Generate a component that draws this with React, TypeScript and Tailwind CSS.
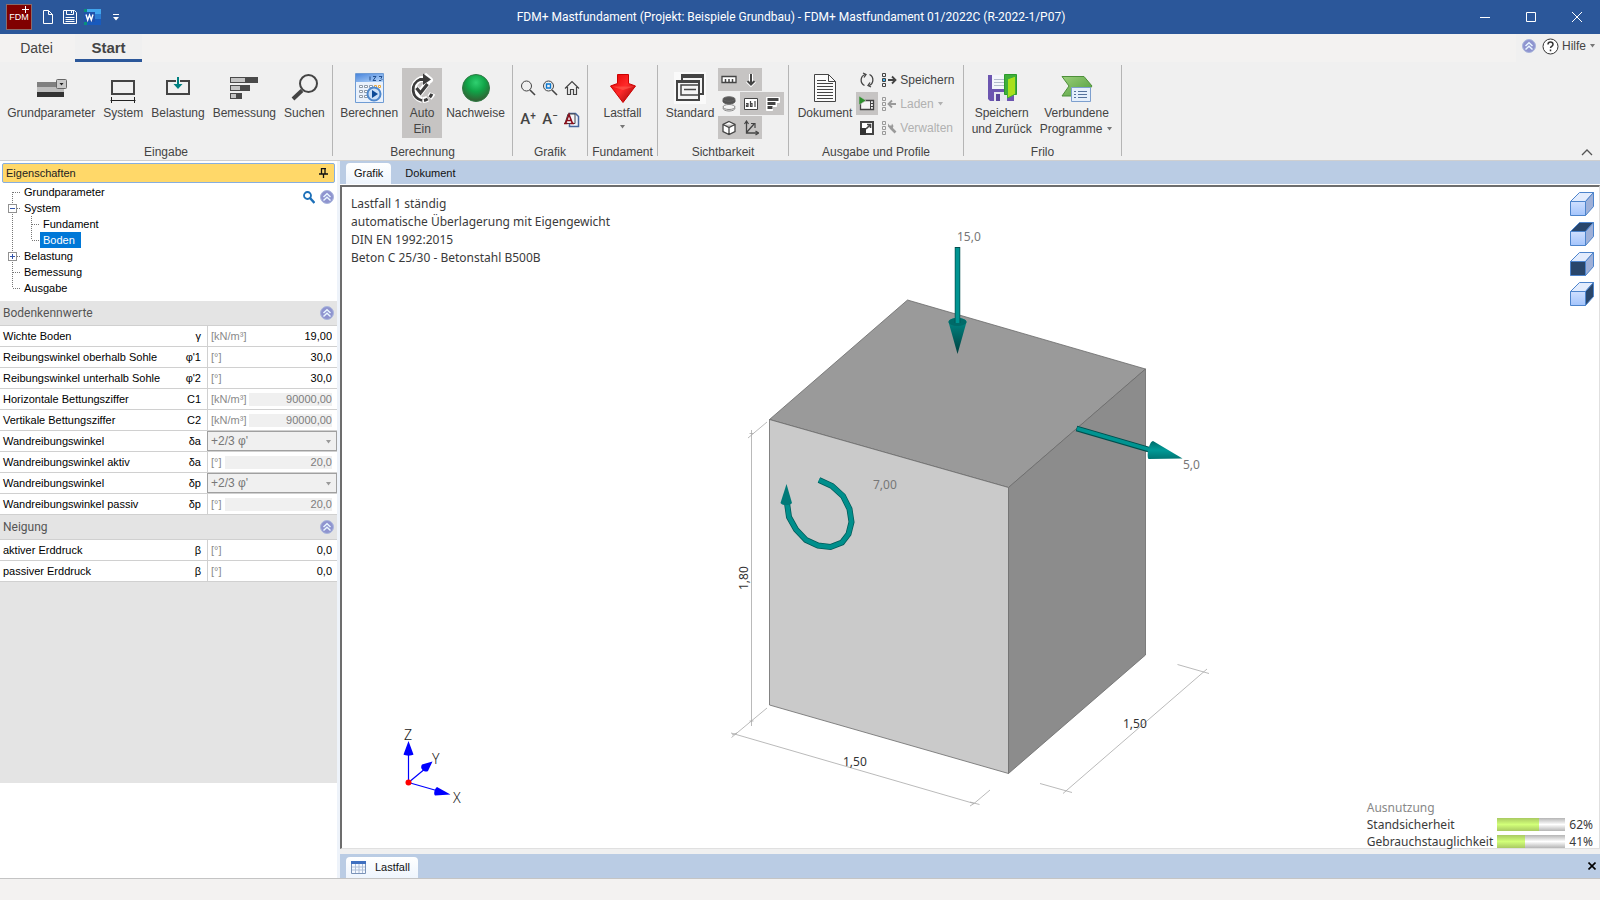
import { useState } from 'react'
import type { ReactNode } from 'react'
import clsx from 'clsx'

/* ---------- shared icons ---------- */

function Caret({ className = 'text-[#777]' }: { className?: string }) {
  return (
    <svg width="7" height="4" viewBox="0 0 7 4" className={clsx('shrink-0', className)}>
      <path d="M1 0h5L3.500 3.500z" fill="currentColor" />
    </svg>
  )
}

function CollapseIcon({ size = 14 }: { size?: number }) {
  return (
    <svg width={size} height={size} viewBox="0 0 14 14">
      <circle cx="7" cy="7" r="6.500" fill="#8f94cf" stroke="#a9b6dc" />
      <path d="M3.500 7 7 3.700 10.500 7M3.500 10.500 7 7.200l3.500 3.300" fill="none" stroke="#e8f6ff" strokeWidth="1.500" />
    </svg>
  )
}

function AppLogo() {
  return (
    <div className="relative flex h-[26px] w-[26px] items-center justify-center border border-[#8a6a6a] bg-[#800000]">
      <span className="font-['Liberation_Sans'] text-[9px] leading-3 text-white">FDM</span>
      <svg width="7" height="7" viewBox="0 0 7 7" className="absolute top-px right-0.5">
        <path d="M3.500 0v7M0 3.500h7" stroke="#fff" />
      </svg>
    </div>
  )
}

function NewIcon() {
  return (
    <svg width="12" height="16" viewBox="0 0 12 16" fill="none" stroke="#fff">
      <path d="M1.500 1.500h5l4 4v9h-9zM6.500 1.500v4h4" />
    </svg>
  )
}

function DiskIcon() {
  return (
    <svg width="16" height="16" viewBox="0 0 16 16" fill="none" stroke="#fff">
      <path d="M1.500 1.500h11l2 2v11h-13zM4.500 1.500v4h7v-4M9.500 2v2M3.500 8.500h9M3.500 10.500h9M3.500 12.500h9" />
    </svg>
  )
}

function WordIcon() {
  return (
    <svg width="17" height="16" viewBox="0 0 17 16">
      <path d="M3 0h14v5H3z" fill="#41a5ee" />
      <path d="M3 5h14v5H3z" fill="#2b7cd3" />
      <path d="M3 10h14v6H3z" fill="#185abd" />
      <path d="M0 0h3v3H0zM0 13h3v3H0z" fill="#0a8f7b" />
      <path d="M0 3h11v10H0z" fill="#2052ab" />
      <path d="M2 5.500 3.700 11 5.500 6 7.300 11 9 5.500" fill="none" stroke="#fff" strokeWidth="1.400" />
    </svg>
  )
}

/* ---------- large ribbon icons ---------- */

function ParameterIcon() {
  return (
    <svg width="32" height="32" viewBox="0 0 32 32">
      <path d="M2 10h27v5H2z" fill="#808080" />
      <path d="M2 15h27v5H2z" fill="#bdbdbd" />
      <path d="M2 20h27v5H2z" fill="#333" />
      <rect x="21.500" y="7.500" width="10" height="9" rx="1" fill="#c9c9c9" stroke="#666" />
      <path d="M24.500 11h4l-2 2.500z" fill="#222" />
    </svg>
  )
}

function SystemIcon() {
  return (
    <svg width="32" height="32" viewBox="0 0 32 32" fill="none">
      <path d="M5 9h22v13H5z" stroke="#444" strokeWidth="2" />
      <path d="M3.500 28.500h25M4.500 25v6M27.500 25v6" stroke="#222" />
    </svg>
  )
}

function LoadIcon() {
  return (
    <svg width="32" height="32" viewBox="0 0 32 32" fill="none">
      <path d="M5 9h22v13H5z" stroke="#444" strokeWidth="2" />
      <path d="M14 5h4v7h3.500v1.500L16 18l-5.500-4.500V12H14z" fill="#f0f0f0" />
      <path d="M15 5h2v7h3.500L16 17l-4.500-5H15z" fill="#008080" />
    </svg>
  )
}

function DesignIcon() {
  return (
    <svg width="32" height="32" viewBox="0 0 32 32">
      <path d="M2 5h28v6H2zM2 13h20v6H2zM2 21h12v6H2z" fill="#4a4a4a" />
      <path d="M3 6h14v4H3zM3 14h9v4H3zM3 22h5v4H3z" fill="#c4c4c4" />
    </svg>
  )
}

function SearchIcon() {
  return (
    <svg width="32" height="32" viewBox="0 0 32 32" fill="none" stroke="#444">
      <circle cx="20.500" cy="11.500" r="8.500" strokeWidth="2" />
      <path d="M14 18.500 5 27" strokeWidth="4" />
    </svg>
  )
}

function CalculateIcon() {
  return (
    <svg width="32" height="32" viewBox="0 0 32 32">
      <defs>
        <linearGradient id="calcHead" x1="0" y1="0" x2="1" y2="1">
          <stop offset="0" stopColor="#4a86dc" />
          <stop offset="1" stopColor="#b8d7fa" />
        </linearGradient>
      </defs>
      <path d="M2.500 1.500h28v29h-28z" fill="#e9f1fc" stroke="#6f9cd4" />
      <path d="M3 2h27v8H3z" fill="url(#calcHead)" />
      <path d="M17 4.500v4M20 4.500h3l-3 4h3M26 4.500h3l-1 2 1 1-1 1h-2" fill="none" stroke="#23508f" />
      <g fill="#fff" stroke="#8c99a8">
        <path d="M6.500 13.500h3v2h-3zM11.500 13.500h3v2h-3zM16.500 13.500h3v2h-3zM6.500 18.500h3v2h-3zM11.500 18.500h3v2h-3zM6.500 23.500h3v2h-3zM11.500 23.500h3v2h-3z" />
        <path d="M21.500 13.500h2v2h-2zM25.500 13.500h2v2h-2z" stroke="#eba83c" />
      </g>
      <circle cx="21" cy="22" r="6.500" fill="#c9dff8" stroke="#4f88cc" strokeWidth="2" />
      <path d="M19 18v8l6-4z" fill="#0c4a97" />
    </svg>
  )
}

function AutoIcon() {
  return (
    <svg width="32" height="32" viewBox="0 0 32 32" fill="none">
      <g stroke="#fff" strokeWidth="6" strokeLinejoin="round">
        <path d="M16 28A11 11 0 0 1 15 7h4M18 3l6 5-6 4M10 16l4 5 8-11" />
        <path d="M17 28a11 11 0 0 0 10-8" strokeDasharray="5 2" />
      </g>
      <path d="M16 28.500A11 11 0 0 1 14 7.500h6" stroke="#3c3c3c" strokeWidth="2.800" />
      <path d="M17 1.500 25 7.500 17 13z" fill="#3c3c3c" />
      <path d="m10.500 16 4 5 7-9" stroke="#3c3c3c" strokeWidth="3.200" />
      <path d="M18 28.500a11 11 0 0 0 8.500-9" stroke="#3c3c3c" strokeWidth="3" strokeDasharray="4 2.500" />
    </svg>
  )
}

function ChecksIcon() {
  return (
    <svg width="32" height="32" viewBox="0 0 32 32">
      <defs>
        <radialGradient id="ball" cx=".5" cy=".3" r=".75">
          <stop offset="0" stopColor="#2fd070" />
          <stop offset=".45" stopColor="#10a347" />
          <stop offset="1" stopColor="#39512f" />
        </radialGradient>
      </defs>
      <circle cx="16" cy="16" r="13.500" fill="url(#ball)" stroke="#2f7a45" />
    </svg>
  )
}

function LoadCaseIcon() {
  return (
    <svg width="32" height="32" viewBox="0 0 32 32">
      <defs>
        <linearGradient id="redArrow" x1="0" y1="0" x2="1" y2="1">
          <stop offset="0" stopColor="#e00000" />
          <stop offset=".5" stopColor="#ff2a2a" />
          <stop offset="1" stopColor="#8e0000" />
        </linearGradient>
      </defs>
      <path d="M10.500 2.500h11v9L28.500 14 16 30.500 3.500 14l7-2.500z" fill="url(#redArrow)" stroke="#c00" />
      <path d="M5 14.500h22L16 18z" fill="#ff5d50" opacity=".6" />
    </svg>
  )
}

function StandardIcon() {
  return (
    <svg width="32" height="32" viewBox="0 0 32 32" fill="none">
      <path d="M0 0h32v32H0z" fill="#fafafa" />
      <path d="M8 3h21v19H8z" fill="#f5f5f5" stroke="#444" strokeWidth="2" />
      <path d="M7 2h23v4H7z" fill="#444" />
      <path d="M3 9h22v19H3z" fill="#f5f5f5" stroke="#444" strokeWidth="2" />
      <path d="M2 8h24v3H2z" fill="#444" />
      <path d="M7 13h18v10H7z" stroke="#444" strokeWidth="1.500" />
      <path d="M10 17.500h12" stroke="#444" strokeWidth="1.500" />
    </svg>
  )
}

function DocumentIcon() {
  return (
    <svg width="32" height="32" viewBox="0 0 32 32" fill="none" stroke="#444">
      <path d="M5.500 2.500h14l7 7v20h-21z" fill="#fbfbfb" />
      <path d="M19.500 2.500v7h7" />
      <path d="M8 8.500h9M8 11.500h16M8 14.500h16M8 17.500h16M8 20.500h16M8 23.500h16M8 26.500h16" />
    </svg>
  )
}

function SaveBackIcon() {
  return (
    <svg width="32" height="32" viewBox="0 0 32 32">
      <path d="M2 3h26v26H4l-2-2z" fill="#6c55b0" />
      <path d="M6 3h14v14H6z" fill="#f4f6fb" />
      <path d="M8 7.500h10M8 10.500h10M8 13.500h10" stroke="#b3bccd" />
      <path d="M8 20h13v9H8z" fill="#e6e6ee" />
      <path d="M10 22h4v7h-4z" fill="#5b469c" />
      <path d="M18.500 2.500h12v20h-12z" fill="#3fae3a" stroke="#2b9a2b" />
      <path d="M21.500 7 29.500 4v18l-8 4z" fill="#a8e01c" stroke="#3fae3a" />
    </svg>
  )
}

function LinkedIcon() {
  return (
    <svg width="32" height="32" viewBox="0 0 32 32">
      <defs>
        <linearGradient id="greenArrow" x1="0" y1="0" x2="1" y2="1">
          <stop offset="0" stopColor="#9bcf7a" />
          <stop offset="1" stopColor="#4f9c3c" />
        </linearGradient>
      </defs>
      <path d="M1 4.500h22l8 9.500-8 10H1L8 14z" fill="url(#greenArrow)" stroke="#4d8f3a" />
      <path d="M10.500 15.500h19v14h-19z" fill="#e4eefb" stroke="#7d9fce" />
      <path d="M13 19.500h2m2 0h9M13 22.500h2m2 0h9M13 25.500h2m2 0h9" stroke="#54719c" />
    </svg>
  )
}

/* ---------- small ribbon icons ---------- */

function Small({ children }: { children: ReactNode }) {
  return (
    <svg width="16" height="16" viewBox="0 0 16 16" fill="none" stroke="#444" className="shrink-0">
      {children}
    </svg>
  )
}

const zoomIcon = (
  <Small>
    <circle cx="6.500" cy="6" r="5" />
    <path d="m10 10 5 5" strokeWidth="1.600" />
  </Small>
)
const zoomFitIcon = (
  <Small>
    <circle cx="6.500" cy="6" r="5" />
    <path d="m10 10 5 5" strokeWidth="1.600" />
    <path d="M4.500 4h4v4h-4z" stroke="#0a78d0" strokeWidth="1.400" />
  </Small>
)
const homeIcon = (
  <Small>
    <path d="M1 8.500 8 1.500l7 7M3.500 7v7.500h3v-5h3v5h3V7" strokeWidth="1.200" />
  </Small>
)
const docAIcon = (
  <Small>
    <path d="M5.500 1.500h6l3 3v10h-9z" fill="#eef3fc" stroke="#46659c" strokeWidth="1.500" />
    <path d="M1 11.500h10V2H4z" fill="#f4f6fb" />
    <path d="m1.500 11.500 3.500-9 3.500 9M3 8.500h4M0 11.500h3.500M6.500 11.500H10" stroke="#8b0d1a" strokeWidth="1.600" />
  </Small>
)
const rulerIcon = (
  <Small>
    <path d="M1 4.500h14v6H1z" fill="#fff" strokeWidth="1.300" />
    <path d="M4.500 10V7M8 10V7M11.500 10V7" strokeWidth="1.500" />
  </Small>
)
const downIcon = (
  <Small>
    <path d="M8 2v10M4.500 9 8 12.500 11.500 9" stroke="#fff" strokeWidth="4" />
    <path d="M8 2v10M4.500 9 8 12.500 11.500 9" strokeWidth="2" />
  </Small>
)
const layersIcon = (
  <Small>
    <path d="M2 12c0 4 12 4 12 0" fill="#f4f4f4" stroke="#888" />
    <ellipse cx="8" cy="11" rx="6" ry="2.500" fill="#f4f4f4" stroke="#888" />
    <path d="M2 3.500v2c0 3 12 3 12 0v-2z" fill="#555" stroke="#555" />
    <ellipse cx="8" cy="3" rx="6" ry="2.200" fill="#555" stroke="#666" />
  </Small>
)
const labelIcon = (
  <Small>
    <path d="M1.500 2.500h13v11h-13z" fill="#fff" />
    <path d="M3 7.500h2v3H3.500v-1.500H5M7.500 5v5.500H9v-3H7.500M12 5v6" strokeWidth="1.200" />
  </Small>
)
const barsIcon = (
  <Small>
    <path d="M1.500 1.500h13v5h-3v4h-4v4h-6z" fill="#fff" stroke="#fff" />
    <path d="M2.500 3.500h11M2.500 7.500h8M2.500 11.500h5" strokeWidth="3" />
  </Small>
)
const cubeIcon = (
  <Small>
    <path d="M8 1.500 14 4.500v7L8 14.500l-6-3v-7zM2 4.500l6 3 6-3M8 7.500v7" fill="#fff" strokeWidth="1.300" />
  </Small>
)
const axesIcon = (
  <Small>
    <path d="M3.500 2v11H15M3.500 12.500l8-9" strokeWidth="1.300" />
    <path d="M8 3.500h4V8M1.500 4l2-3 2 3M12.500 11l3 2-3 2" strokeWidth="1.200" />
  </Small>
)
const refreshIcon = (
  <Small>
    <path d="M6 2.500A6 6 0 0 0 5.500 13.500M10 13.500A6 6 0 0 0 10.500 2.500" strokeWidth="1.300" />
    <path d="m4 1 3 1.500L5 5.500M12 15l-3-1.500 2-3" strokeWidth="1.300" />
  </Small>
)
const playWindowIcon = (
  <Small>
    <path d="M1.500 4.500h13v9h-13z" fill="#f4f4f4" strokeWidth="1.300" />
    <path d="M11.500 4.500v9M12 7.500h3M12 10.500h3" />
    <path d="M0 0 7 4.500 0 9z" fill="#2c8f2c" stroke="#c6c4c3" strokeWidth=".6" />
  </Small>
)
const expandIcon = (
  <Small>
    <path d="M2 2h12v12H2z" fill="#fff" strokeWidth="2" />
    <path d="M1 8h6v7H1z" fill="#333" stroke="none" />
    <path d="m7 9 4.500-4.500M8 4.500h3.500V8" strokeWidth="1.600" />
  </Small>
)

function ProfileIcon({ kind }: { kind: 'save' | 'load' | 'manage' }) {
  const color = kind === 'save' ? '#444' : '#9a9a9a'
  return (
    <svg width="16" height="16" viewBox="0 0 16 16" fill="none" stroke={color} className="shrink-0">
      <path d="M1.500 1.500h3v3h-3zM1.500 11.500h3v3h-3z" />
      <path d="M1.500 6.500h3v3h-3z" fill={kind === 'save' ? '#3bb4f2' : 'none'} />
      {kind === 'save' && <path d="M7 8h7M11 4.500 14.500 8 11 11.500" strokeWidth="1.800" />}
      {kind === 'load' && <path d="M15 8H8M11 4.500 7.500 8l3.500 3.500" strokeWidth="1.800" />}
      {kind === 'manage' && (
        <>
          <path d="m9.500 7.500 5 5" strokeWidth="2.600" />
          <path d="M7 3.500v3l2 2h2.500l1-2.500-1.500-2.500-.5 2h-2z" fill={color} stroke="none" />
        </>
      )}
    </svg>
  )
}

/* ---------- ribbon ---------- */

function BigButton({ icon, lines, active = false, caret = false }: { icon: ReactNode, lines: string[], active?: boolean, caret?: boolean }) {
  return (
    <button className={clsx('flex h-[70px] shrink-0 flex-col items-center px-1 pt-1 leading-4', active && 'bg-[#c6c4c3]')}>
      {icon}
      <span className="pt-px">{lines[0]}</span>
      {lines[1] && (
        <span className="flex items-center gap-1">
          {lines[1]}
          {caret && <Caret />}
        </span>
      )}
      {!lines[1] && caret && <span className="pt-1"><Caret /></span>}
    </button>
  )
}

function RibbonGroup({ title, className, children }: { title: string, className: string, children: ReactNode }) {
  return (
    <section className={clsx('flex shrink-0 flex-col border-r border-[#b5b5b5]', className)}>
      <div className="flex flex-1 justify-center pt-[3px]">{children}</div>
      <h2 className="text-center leading-2">{title}</h2>
    </section>
  )
}

function ToolCell({ label, active = false, children }: { label: string, active?: boolean, children: ReactNode }) {
  return (
    <button aria-label={label} className={clsx('flex h-[23px] w-[22px] items-center justify-center', active && 'bg-[#c6c4c3]')}>
      {children}
    </button>
  )
}

function Ribbon() {
  return (
    <div className="flex h-[99px] border-b border-[#cfcfcf] bg-[#f0f0f0] pt-[3px] pb-1 text-[12px] text-[#444]">
      <RibbonGroup title="Eingabe" className="w-[333px]">
        <BigButton icon={<ParameterIcon />} lines={['Grundparameter']} />
        <BigButton icon={<SystemIcon />} lines={['System']} />
        <BigButton icon={<LoadIcon />} lines={['Belastung']} />
        <BigButton icon={<DesignIcon />} lines={['Bemessung']} />
        <BigButton icon={<SearchIcon />} lines={['Suchen']} />
      </RibbonGroup>
      <RibbonGroup title="Berechnung" className="w-[180px]">
        <BigButton icon={<CalculateIcon />} lines={['Berechnen']} />
        <BigButton icon={<AutoIcon />} lines={['Auto', 'Ein']} active />
        <BigButton icon={<ChecksIcon />} lines={['Nachweise']} />
      </RibbonGroup>
      <RibbonGroup title="Grafik" className="w-[75px]">
        <div className="grid grid-cols-3 content-start gap-y-[9px] pt-2">
          <ToolCell label="Zoom">{zoomIcon}</ToolCell>
          <ToolCell label="Zoom Fenster">{zoomFitIcon}</ToolCell>
          <ToolCell label="Ansicht zurücksetzen">{homeIcon}</ToolCell>
          <ToolCell label="Schrift größer"><span className="font-[Roboto] text-[15px] font-medium">A<sup className="text-[10px]">+</sup></span></ToolCell>
          <ToolCell label="Schrift kleiner"><span className="font-[Roboto] text-[15px] font-medium">A<sup className="text-[10px]">−</sup></span></ToolCell>
          <ToolCell label="Schrift">{docAIcon}</ToolCell>
        </div>
      </RibbonGroup>
      <RibbonGroup title="Fundament" className="w-[70px]">
        <BigButton icon={<LoadCaseIcon />} lines={['Lastfall']} caret />
      </RibbonGroup>
      <RibbonGroup title="Sichtbarkeit" className="w-[131px]">
        <BigButton icon={<StandardIcon />} lines={['Standard']} />
        <div className="grid grid-cols-3 content-start gap-y-px">
          <ToolCell label="Bemaßung" active>{rulerIcon}</ToolCell>
          <ToolCell label="Lasten" active>{downIcon}</ToolCell>
          <span />
          <ToolCell label="Schichten">{layersIcon}</ToolCell>
          <ToolCell label="Texte" active>{labelIcon}</ToolCell>
          <ToolCell label="Ausnutzung" active>{barsIcon}</ToolCell>
          <ToolCell label="Körper" active>{cubeIcon}</ToolCell>
          <ToolCell label="Achsen" active>{axesIcon}</ToolCell>
        </div>
      </RibbonGroup>
      <RibbonGroup title="Ausgabe und Profile" className="w-[175px]">
        <BigButton icon={<DocumentIcon />} lines={['Dokument']} />
        <div className="flex flex-col gap-px">
          <ToolCell label="Aktualisieren">{refreshIcon}</ToolCell>
          <ToolCell label="Vorschau" active>{playWindowIcon}</ToolCell>
          <ToolCell label="Vergrößern">{expandIcon}</ToolCell>
        </div>
        <div className="flex flex-col gap-px pr-1 pl-[3px]">
          <button className="flex h-[23px] items-center gap-[3px]"><ProfileIcon kind="save" />Speichern</button>
          <button className="flex h-[23px] items-center gap-[3px] text-[#b1b1b1]"><ProfileIcon kind="load" />Laden<Caret className="text-[#b1b1b1]" /></button>
          <button className="flex h-[23px] items-center gap-[3px] text-[#b1b1b1]"><ProfileIcon kind="manage" />Verwalten</button>
        </div>
      </RibbonGroup>
      <RibbonGroup title="Frilo" className="w-[158px]">
        <BigButton icon={<SaveBackIcon />} lines={['Speichern', 'und Zurück']} />
        <BigButton icon={<LinkedIcon />} lines={['Verbundene', 'Programme']} caret />
      </RibbonGroup>
      <button aria-label="Menüband reduzieren" className="mt-auto mr-[7px] ml-auto">
        <svg width="12" height="7" viewBox="0 0 12 7" fill="none" stroke="#555" strokeWidth="1.300">
          <path d="m1 6 5-5 5 5" />
        </svg>
      </button>
    </div>
  )
}

function TitleBar() {
  return (
    <header className="flex h-[34px] items-center bg-[#2b579a] text-white">
      <div className="flex flex-1 items-center pl-1.5">
        <AppLogo />
        <button aria-label="Neu" className="ml-2.5"><NewIcon /></button>
        <button aria-label="Speichern" className="ml-2"><DiskIcon /></button>
        <button aria-label="Word-Ausgabe" className="ml-1.5"><WordIcon /></button>
        <button aria-label="Schnellzugriff anpassen" className="ml-3">
          <svg width="6" height="7" viewBox="0 0 6 7"><path d="M0 0h6v1H0zM0 3h6L3 6.500z" fill="#fff" /></svg>
        </button>
      </div>
      <h1 className="pr-6 pb-px font-[Roboto] text-[12px] leading-4 whitespace-nowrap">
        FDM+ Mastfundament (Projekt: Beispiele Grundbau) - FDM+ Mastfundament 01/2022C (R-2022-1/P07)
      </h1>
      <div className="flex flex-1 justify-end">
        <button aria-label="Minimieren" className="flex h-[34px] w-[46px] items-center justify-center">
          <svg width="10" height="10" viewBox="0 0 10 10"><path d="M0 5.500h10" stroke="#fff" /></svg>
        </button>
        <button aria-label="Maximieren" className="flex h-[34px] w-[46px] items-center justify-center">
          <svg width="10" height="10" viewBox="0 0 10 10"><path d="M.5.500h9v9h-9z" fill="none" stroke="#fff" /></svg>
        </button>
        <button aria-label="Schließen" className="flex h-[34px] w-[46px] items-center justify-center">
          <svg width="10" height="10" viewBox="0 0 10 10"><path d="m0 0 10 10M10 0 0 10" stroke="#fff" /></svg>
        </button>
      </div>
    </header>
  )
}

function TabBar() {
  return (
    <nav className="flex h-7 items-stretch bg-[#f3f2f1] text-[14px] text-[#444]">
      <button className="w-[75px] pr-0.5">Datei</button>
      <button className="w-[67px] border-b-3 border-[#2b579a] bg-[#f0f0f0] pt-[3px] text-[15px] font-bold">Start</button>
      <div className="ml-auto flex items-center gap-1.5 bg-[#f0f0f0] pr-1 pb-1 pl-1.5 text-[12px]">
        <button aria-label="Einklappen"><CollapseIcon /></button>
        <button className="flex items-center gap-[3px]">
          <svg width="17" height="17" viewBox="0 0 17 17" fill="none" stroke="#333">
            <circle cx="8.500" cy="8.500" r="7.500" fill="#fff" />
            <path d="M6 6.500c0-3.300 5-3.300 5 0 0 1.800-2.500 1.800-2.500 3.500M8.500 11.500v1.700" strokeWidth="1.500" />
          </svg>
          Hilfe
          <Caret />
        </button>
      </div>
    </nav>
  )
}

/* ---------- property panel ---------- */

type TreeItem = { label: string, level: 1 | 2, box?: '+' | '-', first?: boolean, last?: boolean }

const tree: TreeItem[] = [
  { label: 'Grundparameter', level: 1, first: true },
  { label: 'System', level: 1, box: '-' },
  { label: 'Fundament', level: 2 },
  { label: 'Boden', level: 2, last: true },
  { label: 'Belastung', level: 1, box: '+' },
  { label: 'Bemessung', level: 1 },
  { label: 'Ausgabe', level: 1, last: true },
]

function TreeLines({ item }: { item: TreeItem }) {
  const outerEnd = item.level === 1 && item.last ? 8 : 16
  return (
    <svg width={item.level === 1 ? 21 : 40} height="16" className="shrink-0" fill="none" stroke="#777" strokeDasharray="1 1">
      <path d={`M12.500 ${item.first ? 8 : 0}V${outerEnd}`} />
      {item.level === 1 && <path d="M13 8.500h8" />}
      {item.level === 2 && <path d={`M31.500 0V${item.last ? 8 : 16}M32 8.500h8`} />}
      {item.box && (
        <g strokeDasharray="none">
          <rect x="8.500" y="4.500" width="8" height="8" fill="#fff" stroke="#919191" />
          <path d={item.box === '+' ? 'M10 8.500h5M12.500 6v5' : 'M10 8.500h5'} stroke="#3355aa" />
        </g>
      )}
    </svg>
  )
}

function Tree() {
  const [selected, setSelected] = useState('Boden')
  return (
    <ul className="flex-1">
      {tree.map((item) => (
        <li key={item.label} className="flex h-4">
          <TreeLines item={item} />
          <button
            onClick={() => setSelected(item.label)}
            className={clsx('h-4 pr-1.5 pl-[3px] leading-4', selected === item.label && 'bg-[#0078d7] text-white')}
          >
            {item.label}
          </button>
        </li>
      ))}
    </ul>
  )
}

type Row = { id: string, label: string, symbol: string, unit?: string, value: string, disabled?: boolean, select?: boolean }

const soilRows: Row[] = [
  { id: 'wichte', label: 'Wichte Boden', symbol: 'γ', unit: '[kN/m³]', value: '19,00' },
  { id: 'phi1', label: 'Reibungswinkel oberhalb Sohle', symbol: "φ'1", unit: '[°]', value: '30,0' },
  { id: 'phi2', label: 'Reibungswinkel unterhalb Sohle', symbol: "φ'2", unit: '[°]', value: '30,0' },
  { id: 'c1', label: 'Horizontale Bettungsziffer', symbol: 'C1', unit: '[kN/m³]', value: '90000,00', disabled: true },
  { id: 'c2', label: 'Vertikale Bettungsziffer', symbol: 'C2', unit: '[kN/m³]', value: '90000,00', disabled: true },
  { id: 'da', label: 'Wandreibungswinkel', symbol: 'δa', value: "+2/3 φ'", disabled: true, select: true },
  { id: 'daValue', label: 'Wandreibungswinkel aktiv', symbol: 'δa', unit: '[°]', value: '20,0', disabled: true },
  { id: 'dp', label: 'Wandreibungswinkel', symbol: 'δp', value: "+2/3 φ'", disabled: true, select: true },
  { id: 'dpValue', label: 'Wandreibungswinkel passiv', symbol: 'δp', unit: '[°]', value: '20,0', disabled: true },
]

const slopeRows: Row[] = [
  { id: 'betaA', label: 'aktiver Erddruck', symbol: 'β', unit: '[°]', value: '0,0' },
  { id: 'betaP', label: 'passiver Erddruck', symbol: 'β', unit: '[°]', value: '0,0' },
]

function PropertyRow({ row }: { row: Row }) {
  return (
    <div className="flex h-[21px] items-stretch border-b border-[#d0d0d0] bg-white">
      <label htmlFor={row.id} className="flex w-[207px] shrink-0 items-center justify-between pr-1.5 pl-[3px]">
        <span>{row.label}</span>
        <span>{row.symbol}</span>
      </label>
      {row.select ? (
        <div className="relative flex flex-1 border border-[#a0a0a0] bg-[#f0f0f0]">
          <select id={row.id} disabled className="w-full appearance-none pl-[3px] text-[12px] text-[#777]">
            <option>{row.value}</option>
          </select>
          <span className="pointer-events-none absolute top-2 right-1"><Caret className="text-[#999]" /></span>
        </div>
      ) : (
        <div className="flex min-w-0 flex-1 items-center gap-[3px] border-l border-[#d0d0d0] pr-[5px] pl-[3px]">
          <span className="text-[#8a8a8a]">{row.unit}</span>
          <input
            id={row.id}
            defaultValue={row.value}
            disabled={row.disabled}
            className={clsx('h-[13px] min-w-0 flex-1 text-right', row.disabled && 'bg-[#f0f0f0] text-[#7d7d7d]')}
          />
        </div>
      )}
    </div>
  )
}

function PropertySection({ title, rows }: { title: string, rows: Row[] }) {
  const [open, setOpen] = useState(true)
  return (
    <section>
      <h3 className="flex h-[25px] items-center justify-between border-b border-[#d0d0d0] bg-[#e4e4e4] pr-[3px] pl-[3px] font-[Roboto] text-[12px] text-[#555]">
        {title}
        <button aria-label={`${title} einklappen`} onClick={() => setOpen(!open)}><CollapseIcon /></button>
      </h3>
      {open && rows.map((row) => <PropertyRow key={row.id} row={row} />)}
    </section>
  )
}

function PropertyPanel() {
  return (
    <aside className="flex w-[337px] shrink-0 flex-col bg-white text-[11px] text-black">
      <div className="mx-0.5 mt-0.5 flex h-5 items-center justify-between rounded-xs border border-[#86aee0] bg-[#ffd869] pr-1.5 pl-[3px]">
        <h2 className="text-[#222]">Eigenschaften</h2>
        <svg width="9" height="10" viewBox="0 0 9 10" fill="none" stroke="#111">
          <path d="M2.500 0v6M6 0v6M2 .5h5M0 6h9M4.500 6v4" strokeWidth="1.300" />
        </svg>
      </div>
      <div className="flex items-start pt-px pb-[5px]">
        <Tree />
        <div className="flex items-center gap-[5px] pt-1.5 pr-[3px]">
          <button aria-label="Suchen">
            <svg width="12" height="13" viewBox="0 0 12 13" fill="none" stroke="#1c6fb8">
              <circle cx="4.500" cy="4.500" r="3.500" strokeWidth="1.800" />
              <path d="m7 7 4.500 5" strokeWidth="2.500" />
            </svg>
          </button>
          <button aria-label="Alle einklappen"><CollapseIcon /></button>
        </div>
      </div>
      <PropertySection title="Bodenkennwerte" rows={soilRows} />
      <PropertySection title="Neigung" rows={slopeRows} />
      <div className="min-h-0 flex-1 bg-[#e4e4e4]" />
      <div className="h-[95px] shrink-0" />
    </aside>
  )
}

/* ---------- drawing area ---------- */

function ViewCube({ face }: { face?: 'top' | 'front' | 'side' }) {
  return (
    <svg width="24" height="24" viewBox="0 0 24 24" stroke="#4d84cc" strokeLinejoin="round">
      <defs>
        <linearGradient id="cubeFront" x1="0" y1="0" x2="0" y2="1">
          <stop offset="0" stopColor="#cfdffe" />
          <stop offset="1" stopColor="#a3c4fc" />
        </linearGradient>
      </defs>
      <path d="M.5 9.500 9.500.500h14l-8 9z" fill={face === 'top' ? '#29466b' : '#e3ecfd'} />
      <path d="m15.500 9.500 8-9v14l-8 9z" fill={face === 'side' ? '#29466b' : '#9eb0d8'} />
      <path d="M.5 9.500h15v14H.5z" fill={face === 'front' ? '#29466b' : 'url(#cubeFront)'} />
    </svg>
  )
}

function Scene() {
  return (
    <svg viewBox="342 187 1257 661" className="h-full w-full" fill="none">
      <defs>
        <linearGradient id="cone" x1="0" y1="0" x2="0" y2="1">
          <stop offset="0" stopColor="#008b88" />
          <stop offset="1" stopColor="#003f3e" />
        </linearGradient>
        <linearGradient id="coneSide" x1="0" y1="0" x2="0" y2="1">
          <stop offset="0" stopColor="#006c6a" />
          <stop offset=".5" stopColor="#009a97" />
          <stop offset="1" stopColor="#007573" />
        </linearGradient>
      </defs>

      {/* foundation block */}
      <g stroke="#6a6a6a" strokeWidth=".8">
        <path d="M907.500 300 1145.500 369 1008.500 487.500 769.500 419.500z" fill="#9a9a9a" />
        <path d="M1008.500 487.500 1145.500 369V655L1008.500 773.500z" fill="#8c8c8c" />
        <path d="M769.500 419.500 1008.500 487.500V773.500L769.500 705z" fill="#cacaca" />
      </g>

      {/* dimensions */}
      <g stroke="#a8a8a8" strokeWidth=".8">
        <path d="M751.500 430V726M748 438 767 422M749.500 433.500h4M749.500 721h4M731.500 737.500 767 708" />
        <path d="M731 733 974 803.500 990 790M970 806l4-2.500M970 802l9.500 2.500M732 735l5-2" />
        <path d="M1063 793.500 1207 669M1040 783.500l32 9M1177.500 664.500l31.500 9" />
      </g>
      <g fill="#333">
        <text x="843" y="766">1,50</text>
        <text x="1123" y="728">1,50</text>
        <text transform="translate(748 590) rotate(-90)">1,80</text>
      </g>
      <g fill="#777">
        <text x="957" y="241">15,0</text>
        <text x="1183" y="469">5,0</text>
        <text x="873" y="489">7,00</text>
      </g>

      {/* vertical force */}
      <path d="M948.500 322c0-5.500 18-5.500 18 0L957.500 354z" fill="url(#cone)" />
      <ellipse cx="957.500" cy="322" rx="9" ry="4" fill="#006a68" />
      <path d="M957.500 247v76" stroke="#004f4e" strokeWidth="5.500" />
      <path d="M957.500 248v75" stroke="#009491" strokeWidth="4" />

      {/* horizontal force */}
      <path d="m1076.500 428.500 72 21" stroke="#004f4e" strokeWidth="5.500" />
      <path d="m1077 428.500 72 21" stroke="#009491" strokeWidth="3.500" />
      <path d="M1153 441c-3.500 0-7 14.500-4.500 18l34-.5z" fill="url(#coneSide)" />

      {/* moment */}
      <path
        d="M819 480 832 486 843 496 849.500 509 851.500 522 848.500 534 842 542.500 830.500 547 818 545.500 806 540 796 529.500 789 517 787 503"
        stroke="#005a58" strokeWidth="6"
      />
      <path
        d="M819 480 832 486 843 496 849.500 509 851.500 522 848.500 534 842 542.500 830.500 547 818 545.500 806 540 796 529.500 789 517 787 503"
        stroke="#008f8c" strokeWidth="4.500"
      />
      <path d="M786.500 484 792 503c-2 3-9.500 3-11.500 0z" fill="#007a78" />

      {/* coordinate axes */}
      <path d="M408.500 782.500V750M408.500 782.500 426 768M408.500 782.500 440 791.500" stroke="#00f" strokeWidth="1.200" />
      <path d="m408.500 741 5 13.500c-2 1.500-8 1.500-10 0zM432.500 761.500 428 771c-3 2-9-2-6-6.500zM450.500 794.500 437 787c-2 1-4 7-2 8.500z" fill="#00f" />
      <circle cx="408.500" cy="782.500" r="3" fill="#f00" />
      <g fill="#222" className="text-[14px] font-light">
        <text x="404" y="740">Z</text>
        <text x="432" y="764">Y</text>
        <text x="453" y="803">X</text>
      </g>
    </svg>
  )
}

function Utilisation({ label, percent }: { label: string, percent: number }) {
  return (
    <>
      <span>{label}</span>
      <span
        role="progressbar"
        aria-label={label}
        aria-valuenow={percent}
        className="h-[13px] w-[68px] bg-linear-to-b from-[#b5b5b5] via-white to-[#b5b5b5]"
      >
        <span
          className="block h-full bg-linear-to-b from-[#a9ca62] via-[#d2ff79] to-[#a9ca62]"
          style={{ width: `${percent}%` }}
        />
      </span>
      <span>{percent}%</span>
    </>
  )
}

function GraphicPane() {
  return (
    <div className="relative min-h-0 flex-1 border-t-2 border-r border-b border-l-2 border-t-[#6d6d6d] border-r-[#e0e0e0] border-b-[#e0e0e0] border-l-[#6d6d6d] bg-white font-['Noto_Sans'] text-[12px] text-[#3a3a3a]">
      <div className="absolute inset-0"><Scene /></div>
      <div className="absolute top-2 left-[9px] leading-[18px]">
        <p>Lastfall 1 ständig</p>
        <p>automatische Überlagerung mit Eigengewicht</p>
        <p>DIN EN 1992:2015</p>
        <p>Beton C 25/30 - Betonstahl B500B</p>
      </div>
      <div className="absolute top-[5px] right-[5px] flex flex-col gap-1.5">
        <button aria-label="Isometrie"><ViewCube /></button>
        <button aria-label="Draufsicht"><ViewCube face="top" /></button>
        <button aria-label="Vorderansicht"><ViewCube face="front" /></button>
        <button aria-label="Seitenansicht"><ViewCube face="side" /></button>
      </div>
      <div className="absolute right-1.5 -bottom-0.5 leading-[17px]">
        <p className="text-[#888]">Ausnutzung</p>
        <div className="grid grid-cols-[auto_auto_auto] items-center gap-x-1">
          <Utilisation label="Standsicherheit" percent={62} />
          <Utilisation label="Gebrauchstauglichkeit" percent={41} />
        </div>
      </div>
    </div>
  )
}

function Workspace() {
  return (
    <main className="flex min-w-0 flex-1 flex-col bg-[#f0f0f0] text-[11px] text-[#111]">
      <div className="flex h-[23px] items-end bg-[#bacce4] pl-1.5">
        <button className="h-[21px] rounded-t bg-linear-to-b from-white to-[#eef5fd] px-2">Grafik</button>
        <button className="h-[21px] px-[14px]">Dokument</button>
      </div>
      <div className="h-px bg-white" />
      <GraphicPane />
      <div className="mt-[5px] flex h-6 items-end bg-[#bacce4] pl-1.5">
        <button className="flex h-[21px] items-center gap-[9px] rounded-t bg-linear-to-b from-white to-[#eef5fd] pr-2 pl-[5px]">
          <svg width="15" height="13" viewBox="0 0 15 13">
            <path d="M.5.500h14v12H.5z" fill="#f5f9ff" stroke="#7a93b8" />
            <path d="M0 0h15v3H0z" fill="#3f70c0" />
            <path d="M4.500 3v9M8 3v9M11.500 3v9M1 6h13M1 9h13" stroke="#b0c0d8" />
          </svg>
          Lastfall
        </button>
        <button aria-label="Schließen" className="mr-1 mb-2 ml-auto">
          <svg width="8" height="8" viewBox="0 0 8 8"><path d="m.5.500 7 7M7.500.500l-7 7" stroke="#000" strokeWidth="1.600" /></svg>
        </button>
      </div>
    </main>
  )
}

export default function App() {
  return (
    <div className="flex h-screen flex-col overflow-hidden bg-[#f3f2f1] font-['Liberation_Sans',sans-serif]">
      <TitleBar />
      <TabBar />
      <Ribbon />
      <div className="flex min-h-0 flex-1 gap-[3px] bg-[#eef3fa]">
        <PropertyPanel />
        <Workspace />
      </div>
      <footer className="h-[22px] shrink-0 border-t border-[#c4c4c4] bg-[#f3f2f1]" />
    </div>
  )
}
